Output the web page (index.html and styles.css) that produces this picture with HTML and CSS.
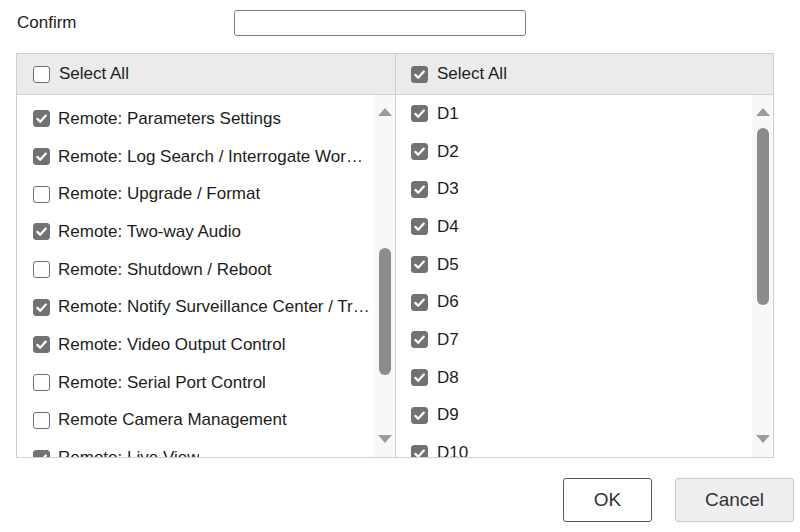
FILE: index.html
```html
<!DOCTYPE html>
<html>
<head>
<meta charset="utf-8">
<link rel="stylesheet" href="styles.css">
</head>
<body>
<div class="page">
  <div class="confirm-row">
    <label class="lbl" for="pw">Confirm</label>
    <input class="pw" id="pw" type="password">
  </div>

  <div class="panel">
    <div class="col col-left">
      <div class="head">
        <span class="cb"></span><span class="txt">Select All</span>
      </div>
      <div class="body">
        <ul class="list list-left">
          <li class="row"><span class="cb on"><svg viewBox="0 0 16 16"><path d="M3.6 8.4 6.6 11.4 12.6 4.9"/></svg></span><span class="txt">Remote: Parameters Settings</span></li>
          <li class="row"><span class="cb on"><svg viewBox="0 0 16 16"><path d="M3.6 8.4 6.6 11.4 12.6 4.9"/></svg></span><span class="txt">Remote: Log Search / Interrogate Working Status</span></li>
          <li class="row"><span class="cb"></span><span class="txt">Remote: Upgrade / Format</span></li>
          <li class="row"><span class="cb on"><svg viewBox="0 0 16 16"><path d="M3.6 8.4 6.6 11.4 12.6 4.9"/></svg></span><span class="txt">Remote: Two-way Audio</span></li>
          <li class="row"><span class="cb"></span><span class="txt">Remote: Shutdown / Reboot</span></li>
          <li class="row"><span class="cb on"><svg viewBox="0 0 16 16"><path d="M3.6 8.4 6.6 11.4 12.6 4.9"/></svg></span><span class="txt">Remote: Notify Surveillance Center / Trigger Alarm Output</span></li>
          <li class="row"><span class="cb on"><svg viewBox="0 0 16 16"><path d="M3.6 8.4 6.6 11.4 12.6 4.9"/></svg></span><span class="txt">Remote: Video Output Control</span></li>
          <li class="row"><span class="cb"></span><span class="txt">Remote: Serial Port Control</span></li>
          <li class="row"><span class="cb"></span><span class="txt">Remote Camera Management</span></li>
          <li class="row"><span class="cb on"><svg viewBox="0 0 16 16"><path d="M3.6 8.4 6.6 11.4 12.6 4.9"/></svg></span><span class="txt">Remote: Live View</span></li>
          <li class="row"><span class="cb on"><svg viewBox="0 0 16 16"><path d="M3.6 8.4 6.6 11.4 12.6 4.9"/></svg></span><span class="txt">Remote: Manual Record</span></li>
        </ul>
        <div class="sb">
          <span class="tri up"></span>
          <div class="track"><div class="thumb thumb-left"></div></div>
          <span class="tri down"></span>
        </div>
      </div>
    </div>

    <div class="col col-right">
      <div class="head">
        <span class="cb on"><svg viewBox="0 0 16 16"><path d="M3.6 8.4 6.6 11.4 12.6 4.9"/></svg></span><span class="txt">Select All</span>
      </div>
      <div class="body">
        <ul class="list list-right">
          <li class="row"><span class="cb on"><svg viewBox="0 0 16 16"><path d="M3.6 8.4 6.6 11.4 12.6 4.9"/></svg></span><span class="txt">D1</span></li>
          <li class="row"><span class="cb on"><svg viewBox="0 0 16 16"><path d="M3.6 8.4 6.6 11.4 12.6 4.9"/></svg></span><span class="txt">D2</span></li>
          <li class="row"><span class="cb on"><svg viewBox="0 0 16 16"><path d="M3.6 8.4 6.6 11.4 12.6 4.9"/></svg></span><span class="txt">D3</span></li>
          <li class="row"><span class="cb on"><svg viewBox="0 0 16 16"><path d="M3.6 8.4 6.6 11.4 12.6 4.9"/></svg></span><span class="txt">D4</span></li>
          <li class="row"><span class="cb on"><svg viewBox="0 0 16 16"><path d="M3.6 8.4 6.6 11.4 12.6 4.9"/></svg></span><span class="txt">D5</span></li>
          <li class="row"><span class="cb on"><svg viewBox="0 0 16 16"><path d="M3.6 8.4 6.6 11.4 12.6 4.9"/></svg></span><span class="txt">D6</span></li>
          <li class="row"><span class="cb on"><svg viewBox="0 0 16 16"><path d="M3.6 8.4 6.6 11.4 12.6 4.9"/></svg></span><span class="txt">D7</span></li>
          <li class="row"><span class="cb on"><svg viewBox="0 0 16 16"><path d="M3.6 8.4 6.6 11.4 12.6 4.9"/></svg></span><span class="txt">D8</span></li>
          <li class="row"><span class="cb on"><svg viewBox="0 0 16 16"><path d="M3.6 8.4 6.6 11.4 12.6 4.9"/></svg></span><span class="txt">D9</span></li>
          <li class="row"><span class="cb on"><svg viewBox="0 0 16 16"><path d="M3.6 8.4 6.6 11.4 12.6 4.9"/></svg></span><span class="txt">D10</span></li>
          <li class="row"><span class="cb on"><svg viewBox="0 0 16 16"><path d="M3.6 8.4 6.6 11.4 12.6 4.9"/></svg></span><span class="txt">D11</span></li>
        </ul>
        <div class="sb">
          <span class="tri up"></span>
          <div class="track"><div class="thumb thumb-right"></div></div>
          <span class="tri down"></span>
        </div>
      </div>
    </div>
  </div>

  <div class="actions">
    <button class="btn btn-ok" type="button">OK</button>
    <button class="btn btn-cancel" type="button">Cancel</button>
  </div>
</div>
</body>
</html>
```

FILE: styles.css
```css
* { box-sizing: border-box; }

html, body {
  margin: 0;
  padding: 0;
  background: #ffffff;
}

body {
  font-family: "Liberation Sans", Arial, sans-serif;
  font-size: 17px;
  color: #1c1c1c;
  width: 800px;
  height: 532px;
  overflow: hidden;
}

.page {
  padding: 10px 6px 0 16px;
}

.confirm-row {
  display: grid;
  grid-template-columns: 218px 292px;
  align-items: center;
  height: 26px;
}

.lbl {
  padding-left: 1px;
  font-size: 17px;
  color: #1c1c1c;
}

.pw {
  width: 292px;
  height: 26px;
  border: 1px solid #7d7d7d;
  border-radius: 3px;
  background: #fff;
  margin: 0;
  padding: 0 4px;
}

.panel {
  margin-top: 17px;
  width: 758px;
  height: 405px;
  border: 1px solid #cfcfcf;
  display: grid;
  grid-template-columns: 379px 1fr;
}

.col {
  display: flex;
  flex-direction: column;
  min-width: 0;
  overflow: hidden;
}

.col-left {
  border-right: 1px solid #cfcfcf;
}

.head {
  height: 41px;
  flex: none;
  background: #ebebeb;
  border-bottom: 1px solid #d2d2d2;
  display: flex;
  align-items: center;
  padding-left: 16px;
  gap: 9px;
}

.col-right .head,
.col-right .row {
  padding-left: 15px;
  gap: 9px;
}

.body {
  flex: 1;
  display: flex;
  min-height: 0;
}

.list {
  list-style: none;
  margin: 0;
  padding: 0;
  flex: 1;
  min-width: 0;
  overflow: hidden;
}

.list-left {
  padding-top: 5px;
  padding-right: 4px;
}

.row {
  height: 37.7px;
  display: flex;
  align-items: center;
  padding-left: 16px;
  gap: 8px;
}

.txt {
  white-space: nowrap;
  overflow: hidden;
  text-overflow: ellipsis;
  min-width: 0;
}

.cb {
  flex: none;
  width: 17px;
  height: 17px;
  border: 1px solid #6e6e6e;
  border-radius: 3px;
  background: #fff;
  display: inline-flex;
  align-items: center;
  justify-content: center;
}

.cb.on {
  background: #727272;
  border-color: #727272;
}

.cb svg {
  width: 15px;
  height: 15px;
  fill: none;
  stroke: #ffffff;
  stroke-width: 2.4;
  stroke-linecap: round;
  stroke-linejoin: round;
}

.sb {
  flex: none;
  width: 21px;
  background: #f8f8f8;
  display: flex;
  flex-direction: column;
  align-items: center;
  padding: 13px 0 14px;
}

.tri {
  flex: none;
  width: 0;
  height: 0;
  border-left: 7px solid transparent;
  border-right: 7px solid transparent;
}

.tri.up {
  border-bottom: 8px solid #9b9b9b;
}

.tri.down {
  border-top: 8px solid #9b9b9b;
}

.track {
  flex: 1;
  width: 12px;
  margin: 12px 0 8px;
}

.thumb {
  width: 12px;
  background: #8c8c8c;
  border-radius: 6px;
}

.thumb-left {
  margin-top: 120px;
  height: 127px;
}

.thumb-right {
  height: 177px;
}

.actions {
  display: flex;
  justify-content: flex-end;
  gap: 23px;
  margin-top: 20px;
}

.btn {
  height: 44px;
  font-family: "Liberation Sans", Arial, sans-serif;
  font-size: 19px;
  color: #333;
  border-radius: 3px;
  padding: 0;
  cursor: pointer;
}

.btn-ok {
  width: 89px;
  background: #ffffff;
  border: 1px solid #555555;
}

.btn-cancel {
  width: 119px;
  background: #efefef;
  border: 1px solid #c9c9c9;
}
```
